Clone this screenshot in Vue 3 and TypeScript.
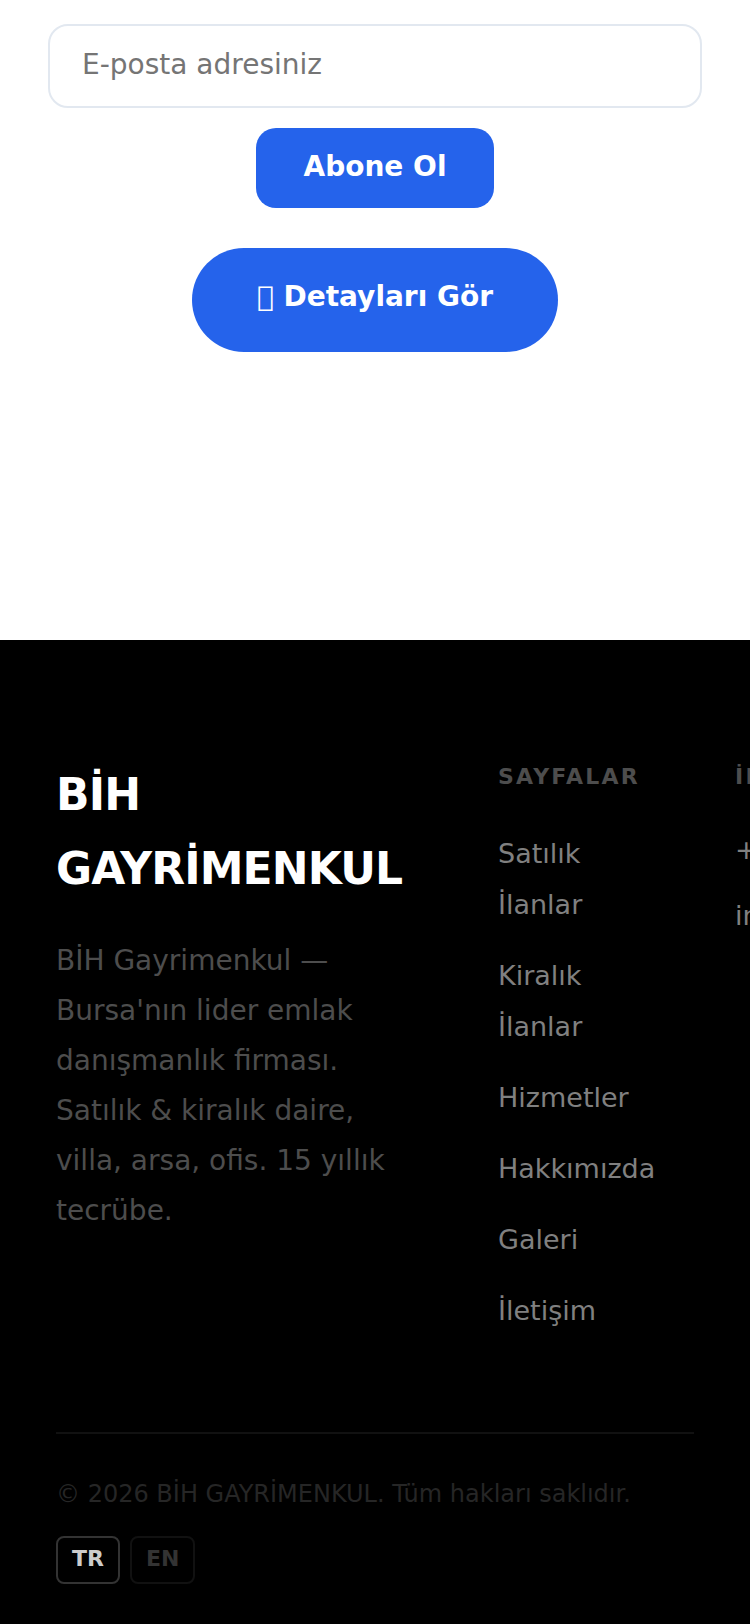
<script setup lang="ts">
import { ref } from 'vue'

const pages: string[] = ['Satılık İlanlar', 'Kiralık İlanlar', 'Hizmetler', 'Hakkımızda', 'Galeri', 'İletişim']
const languages: string[] = ['TR', 'EN']
const active = ref('TR')
const email = ref('')
</script>

<template>
  <div class="page">
    <main class="subscribe">
      <form class="form" @submit.prevent>
        <input v-model="email" class="email" type="email" placeholder="E-posta adresiniz" aria-label="E-posta adresiniz" />
        <button class="submit" type="submit">Abone Ol</button>
      </form>
      <a class="details" href="#">&#xF06E; Detayları Gör</a>
    </main>
    <footer class="footer">
      <div class="columns">
        <section>
          <h2 class="brand">BİH GAYRİMENKUL</h2>
          <p class="about">BİH Gayrimenkul — Bursa'nın lider emlak danışmanlık firması. Satılık &amp; kiralık daire, villa, arsa, ofis. 15 yıllık tecrübe.</p>
        </section>
        <nav aria-labelledby="pages-title">
          <h3 id="pages-title" class="title">SAYFALAR</h3>
          <ul class="links">
            <li v-for="page in pages" :key="page"><a href="#">{{ page }}</a></li>
          </ul>
        </nav>
        <section>
          <h3 class="title">İLETİŞİM</h3>
          <ul class="links contact">
            <li><a href="#">+90</a></li>
            <li><a href="#">info</a></li>
          </ul>
        </section>
      </div>
      <div class="bottom">
        <p class="copyright">© 2026 BİH GAYRİMENKUL. Tüm hakları saklıdır.</p>
        <div class="languages">
          <button v-for="lang in languages" :key="lang" type="button" class="language" :class="{ active: active === lang }" @click="active = lang">{{ lang }}</button>
        </div>
      </div>
    </footer>
  </div>
</template>

<style>
body {
  background: #000;
}
</style>

<style scoped>
* {
  box-sizing: border-box;
}
.page {
  font-family: "DejaVu Sans", sans-serif;
  font-size: 28px;
  overflow-x: hidden;
}
.subscribe {
  display: flex;
  flex-direction: column;
  align-items: center;
  gap: 40px;
  padding: 24px 48px 288px;
  background: #fff;
}
.form {
  display: flex;
  flex-direction: column;
  align-items: center;
  gap: 20px;
  width: 100%;
}
.email {
  width: 100%;
  height: 84px;
  padding: 0 32px 4px;
  border: 2px solid #e2e8f0;
  border-radius: 20px;
  background: #fff;
  font: inherit;
}
.email::placeholder {
  color: #757575;
}
.submit {
  height: 80px;
  padding: 0 47px 4px;
  border: 0;
  border-radius: 20px;
  background: #2563eb;
  color: #fff;
  font: inherit;
  font-weight: 700;
}
.details {
  height: 104px;
  padding: 0 65px;
  border-radius: 52px;
  background: #2563eb;
  color: #fff;
  font-weight: 700;
  line-height: 98px;
  text-decoration: none;
}
.footer {
  padding: 118px 56px 40px;
  background: #000;
}
.columns {
  display: grid;
  grid-template-columns: minmax(362px, 2fr) minmax(157px, 1fr) minmax(157px, 1fr);
  gap: 80px;
}
.brand {
  margin: 0 0 30px;
  color: #fff;
  font-size: 44px;
  letter-spacing: -0.02em;
  line-height: 74px;
}
.about {
  margin: 0;
  color: #4d4d4d;
  line-height: 50px;
}
.title {
  margin: 0 0 32px;
  color: #4d4d4d;
  font-size: 22px;
  letter-spacing: 0.1em;
  line-height: 38px;
}
.links {
  display: grid;
  gap: 20px;
  margin: 0;
  padding: 0;
  color: #808080;
  font-size: 27px;
  line-height: 51px;
  list-style: none;
}
.contact {
  gap: 22px;
  line-height: 44px;
}
.links a {
  color: inherit;
  text-decoration: none;
}
.bottom {
  margin-top: 96px;
  padding-top: 40px;
  border-top: 2px solid #111;
}
.copyright {
  margin: 0 0 22px;
  color: #262626;
  font-size: 24px;
  line-height: 40px;
}
.languages {
  display: flex;
  gap: 10px;
}
.language {
  height: 48px;
  padding: 0 14px 4px;
  border: 2px solid #111;
  border-radius: 8px;
  background: transparent;
  color: #333;
  font: inherit;
  font-size: 22px;
  font-weight: 700;
}
.language.active {
  border-color: #333;
  color: #ccc;
}
</style>
